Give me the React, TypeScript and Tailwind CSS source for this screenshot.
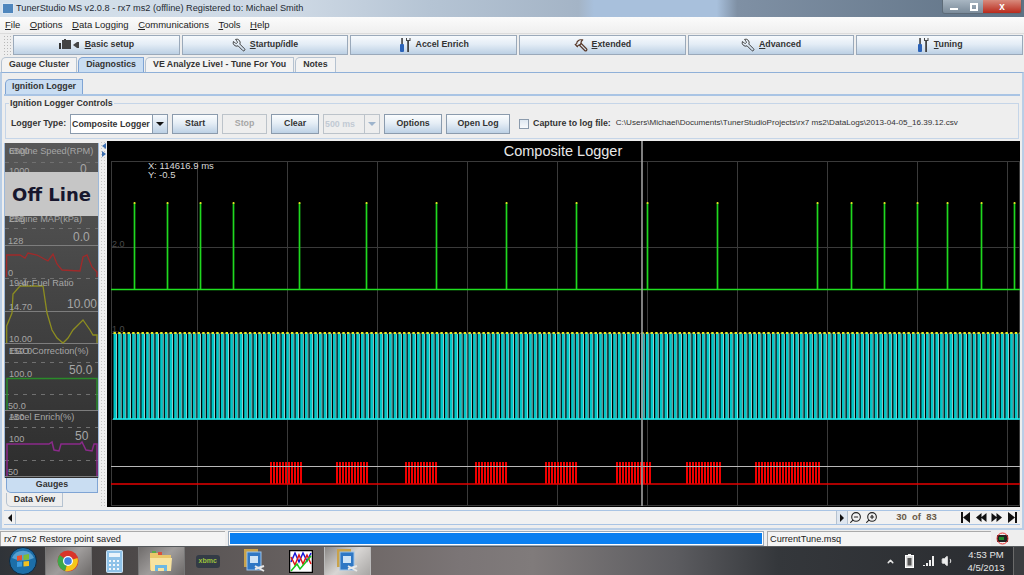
import React from 'react';
import { Hammer, Wrench, ZoomIn, ZoomOut, ChevronUp, Volume1 } from 'lucide-react';

const pulses = [134, 167, 200, 233, 299, 366, 436, 506, 576, 647, 717, 817, 851, 884, 917, 947, 981, 1014];
const bursts = [[270, 302], [336, 369], [405, 438], [475, 508], [545, 578], [616, 650], [686, 720], [755, 820]];
const gridX = [197, 287, 377, 467, 557, 647, 737, 827, 917, 1007];
const gridY = [247, 333, 419];

const stripes: number[] = [];
for (let x = 113.5; x < 1020; x += 4.67) stripes.push(x);

function ToolIcon({ kind }: { kind: string }) {
    if (kind === 'film') {
        return (
            <svg width="22" height="12" viewBox="0 0 22 12">
                <rect x="0" y="4" width="2" height="6" fill="#333" />
                <rect x="3" y="1" width="9" height="9" fill="#444" />
                <rect x="5" y="0" width="2" height="2" fill="#444" />
                <path d="M14 6 L18 3 V9 Z" fill="#444" />
                <rect x="18" y="3" width="2" height="6" fill="#444" />
            </svg>
        );
    }
    if (kind === 'wrench') return <Wrench size={14} strokeWidth={1.6} color="#333" className="-scale-x-100" />;
    if (kind === 'hammer') return <Hammer size={14} strokeWidth={2} color="#5a3a2a" className="-scale-x-100" />;
    return (
        <svg width="13" height="14" viewBox="0 0 13 14">
            <rect x="1" y="6" width="4" height="8" rx="1" fill="#2a62b8" />
            <rect x="2.3" y="0" width="1.5" height="6" fill="#333" />
            <path d="M7 0 V3 H8.2 V14 H10 V3 H11.5 V0 H10.5 V2 H8 V0 Z" fill="#444" />
        </svg>
    );
}

function ToolButton({ icon, first, rest }: { icon: string; first: string; rest: string }) {
    return (
        <button className="flex-1 h-[20px] flex items-center justify-center gap-1 border border-[#9aa9ba] bg-[linear-gradient(#f7fafd,#e4edf6_45%,#bcd0e4)] text-[8.8px] font-bold text-[#333]">
            <ToolIcon kind={icon} />
            <span><u>{first}</u>{rest}</span>
        </button>
    );
}

function CtlButton({ label, w, disabled }: { label: string; w: string; disabled?: boolean }) {
    return (
        <button className={`${w} h-[20px] border text-[8.8px] font-bold ${disabled ? 'border-[#bcc3ca] bg-[#eeeeee] text-[#a6a6a6]' : 'border-[#8b9bad] bg-[linear-gradient(#fbfdfe,#e6eef6_45%,#bdd1e5)] text-[#333]'}`}>
            {label}
        </button>
    );
}

function MainTab({ label, active }: { label: string; active?: boolean }) {
    return (
        <div className={`h-[15px] flex items-center px-[7px] rounded-tl-[5px] border border-b-0 text-[8.8px] font-bold text-[#333] ${active ? 'border-[#7fa4d4] bg-[#c9ddf2]' : 'border-[#b5c2d0] bg-[#f3f3f3]'}`}>
            {label}
        </div>
    );
}

function ChartPlot() {
    return (
        <svg width="913" height="366" viewBox="107 141 913 366" className="block">
            <rect x="107" y="141" width="913" height="366" fill="#000" />
            <rect x="111.5" y="161.5" width="908" height="344" fill="none" stroke="#3a3a3a" />
            {gridX.map((x) => <line key={x} x1={x + 0.5} y1="161" x2={x + 0.5} y2="505" stroke="#3a3a3a" />)}
            {gridY.map((y) => <line key={y} x1="111" y1={y + 0.5} x2="1020" y2={y + 0.5} stroke="#3a3a3a" />)}
            <text x="563" y="156" textAnchor="middle" fontSize="14.5" fill="#e8e8e8">Composite Logger</text>
            <text x="148" y="169" fontSize="9.5" fill="#d8d8d8">X: 114616.9 ms</text>
            <text x="148" y="178" fontSize="9.5" fill="#d8d8d8">Y: -0.5</text>
            <text x="112" y="247" fontSize="9" fill="#4a4a4a">2.0</text>
            <text x="112" y="332" fontSize="9" fill="#4a4a4a">1.0</text>

            <line x1="111" y1="289.5" x2="1020" y2="289.5" stroke="#1fe01f" strokeWidth="1.6" />
            {pulses.map((x) => (
                <g key={x}>
                    <line x1={x + 0.5} y1="203" x2={x + 0.5} y2="289" stroke="#1fd81f" strokeWidth="1.7" />
                    <rect x={x - 0.3} y="202" width="1.7" height="2" fill="#dddd22" />
                </g>
            ))}

            {stripes.map((x) => <rect key={x} x={x} y="333" width="2.6" height="86" fill="#00c8c8" />)}
            {stripes.map((x) => <rect key={x} x={x + 2.6} y="334" width="0.8" height="85" fill="#a8ffff" />)}
            {stripes.map((x) => <rect key={x} x={x} y="332" width="2.4" height="2" fill="#e8e822" />)}
            <line x1="113" y1="419" x2="1020" y2="419" stroke="#19f0f0" strokeWidth="1.5" />

            {bursts.flatMap(([a, b]) => {
                const bars = [];
                for (let x = a; x < b; x += 3) bars.push(<rect key={x} x={x} y="462" width="2" height="22" fill="#f00000" />);
                return bars;
            })}
            <line x1="111" y1="466.5" x2="1020" y2="466.5" stroke="#b8b8b8" />
            <line x1="111" y1="484" x2="1020" y2="484" stroke="#e60000" strokeWidth="1.3" />
            <line x1="642" y1="141" x2="642" y2="506" stroke="#a0a0a0" strokeWidth="1.6" />
        </svg>
    );
}

function GaugeStrip() {
    const txt = '#a6a6a6';
    const solid = [245, 311, 343, 410, 476];
    const dashed = [162, 195, 228, 278, 362, 394, 427, 460];
    return (
        <svg width="93" height="335" viewBox="5 143 93 335" className="block">
            <defs>
                <linearGradient id="gaugeBg" x1="0" y1="0" x2="0" y2="1">
                    <stop offset="0" stopColor="#585858" />
                    <stop offset="1" stopColor="#2d2d2d" />
                </linearGradient>
            </defs>
            <rect x="5" y="143" width="93" height="335" fill="url(#gaugeBg)" />
            {solid.map((y) => <line key={y} x1="5" y1={y + 0.5} x2="98" y2={y + 0.5} stroke="#7d7d7d" />)}
            {dashed.map((y) => <line key={y} x1="5" y1={y + 0.5} x2="98" y2={y + 0.5} stroke="#707070" strokeDasharray="4 5" />)}

            <polyline fill="none" stroke="#a02a2a" strokeWidth="1.3" points="6.5,277 6.7,255 20,255 25,258 28,253 37,255 48,261 53,254 57,264 62,270 80,271 83,257 87,255 92,267 97,272 97,277" />
            <polyline fill="none" stroke="#8d8d20" strokeWidth="1.3" points="6.7,343 6.7,326 12,313 13,294 20,286 43,286 47,313 52,330 57,338 63,343 68,338 73,330 83,320 90,330 93,335 97,335 97,343" />
            <polyline fill="none" stroke="#2a8a2a" strokeWidth="1.5" points="7,410 7,378.5 97,378.5 97,410" />
            <polyline fill="none" stroke="#8a2a8a" strokeWidth="1.5" points="7,476 7,444 49,444 52,442 54,450 59,451 61,444 80,444 82,442 86,450 92,451 94,444 97,444 97,476" />

            <g fontSize="9.2" fill={txt} fontFamily="'Liberation Sans', sans-serif">
                <text x="9" y="154">6500</text>
                <text x="9" y="154">Engine Speed(RPM)</text>
                <text x="9" y="174">1000</text>
                <text x="80" y="173" fontSize="12">0</text>
                <text x="9" y="222">255</text>
                <text x="9" y="222">Engine MAP(kPa)</text>
                <text x="8" y="244">128</text>
                <text x="73" y="241" fontSize="12">0.0</text>
                <text x="8" y="276">0</text>
                <text x="9" y="286">19.4</text>
                <text x="18" y="286">Air:Fuel Ratio</text>
                <text x="9" y="310">14.70</text>
                <text x="67" y="308" fontSize="12">10.00</text>
                <text x="9" y="342">10.00</text>
                <text x="9" y="354">150.0</text>
                <text x="9" y="354">EGO Correction(%)</text>
                <text x="9" y="377">100.0</text>
                <text x="69" y="374" fontSize="12">50.0</text>
                <text x="8" y="409">50.0</text>
                <text x="9" y="420">150</text>
                <text x="9" y="420">Accel Enrich(%)</text>
                <text x="9" y="442">100</text>
                <text x="75" y="440" fontSize="12">50</text>
                <text x="8" y="475">50</text>
            </g>
        </svg>
    );
}

function Splitter() {
    return (
        <div className="w-[7px] flex flex-col items-center bg-[#eeeeee] bg-[radial-gradient(#c4c4c4_0.7px,transparent_0.8px)] bg-[length:3px_3px]">
            <span className="w-0 h-0 border-y-[3px] border-y-transparent border-r-[4px] border-r-[#3d6fb0] mt-[2px]" />
            <span className="w-0 h-0 border-y-[3px] border-y-transparent border-l-[4px] border-l-[#3d6fb0] mt-[2px]" />
        </div>
    );
}

function NavGlyph({ d }: { d: string }) {
    return (
        <svg width="11" height="11" viewBox="0 0 11 11"><path d={d} fill="#111" /></svg>
    );
}

function TaskItem({ active, hot, children }: { active?: boolean; hot?: boolean; children: React.ReactNode }) {
    return (
        <div className={`w-[46.5px] h-full flex items-center justify-center ${active ? 'bg-[linear-gradient(135deg,#8a8785,#d8d6d4_50%,#a8a6a4)] border-x border-[#bbb]' : hot ? 'bg-[linear-gradient(135deg,#6f6c6b,#a09d9c_50%,#6d6a69)] border-x border-[#777]' : ''}`}>
            {children}
        </div>
    );
}

function TunerGlyph() {
    return (
        <svg width="22" height="24" viewBox="0 0 22 24">
            <rect x="1" y="0" width="14" height="18" fill="#c9a24a" />
            <rect x="4" y="3" width="14" height="18" fill="#2f77c4" stroke="#9cc4ea" />
            <rect x="7" y="7" width="8" height="7" fill="#cfe3f5" />
            <path d="M12 20 L21 17 M12 17 L21 22" stroke="#e8e8e8" strokeWidth="2" />
        </svg>
    );
}

function Taskbar() {
    return (
        <div className="h-[29px] flex items-stretch border-t border-[#55595c] bg-[linear-gradient(90deg,#2f3338,#3f3c3c_6%,#5b5656_20%,#6e6766_35%,#7b7576_45%,#807b7b_52%,#5c5c60_66%,#34373b_76%,#2a2c30_100%)]">
            <div className="w-[45px] flex items-center justify-center">
                <svg width="28" height="28" viewBox="0 0 28 28">
                    <circle cx="14" cy="14" r="13.5" fill="#1c6ea8" stroke="#0c2a44" />
                    <path d="M3 11 A12 12 0 0 1 25 11 Q14 16 3 11 Z" fill="#7fc2ea" opacity="0.6" />
                    <path d="M8 9 L13 8 V13 L8 14 Z" fill="#e8502f" />
                    <path d="M14.5 8 L20 7 V12.5 L14.5 13 Z" fill="#7dbb35" />
                    <path d="M8 15 L13 14.5 V19.5 L8 20 Z" fill="#3d9be0" />
                    <path d="M14.5 14.5 L20 14 V19 L14.5 19.5 Z" fill="#f4c120" />
                </svg>
            </div>
            <TaskItem hot>
                <svg width="22" height="22" viewBox="0 0 22 22">
                    <circle cx="11" cy="11" r="10.5" fill="#d9352a" />
                    <path d="M11 11 L20.5 8 A10.5 10.5 0 0 1 8 21 Z" fill="#f5c71a" />
                    <path d="M11 11 L8 21 A10.5 10.5 0 0 1 2.5 5 Z" fill="#3da84a" />
                    <circle cx="11" cy="11" r="5" fill="#fff" />
                    <circle cx="11" cy="11" r="3.8" fill="#3f7fe0" />
                </svg>
            </TaskItem>
            <TaskItem>
                <svg width="17" height="23" viewBox="0 0 17 23">
                    <rect x="0.5" y="0.5" width="16" height="22" rx="1" fill="#8fc2e8" stroke="#cfe3f2" />
                    <rect x="3" y="3" width="11" height="4" fill="#eaf4fb" />
                    <path d="M3 10h2v2H3zM7 10h2v2H7zM11 10h2v2h-2zM3 14h2v2H3zM7 14h2v2H7zM11 14h2v2h-2zM3 18h2v2H3zM7 18h2v2H7zM11 18h2v2h-2z" fill="#f2f7fb" />
                </svg>
            </TaskItem>
            <TaskItem hot>
                <svg width="24" height="22" viewBox="0 0 24 22">
                    <path d="M1 3 H9 L11 5 H22 V20 H1 Z" fill="#e9c76a" />
                    <rect x="3" y="1" width="4" height="2" fill="#58a94a" />
                    <rect x="9" y="2" width="4" height="3" fill="#d8503c" />
                    <path d="M1 8 H23 L22 21 H2 Z" fill="#f7e3a0" />
                    <path d="M6 15 H18 V21 H15 V18 H9 V21 H6 Z" fill="#6cb8e4" />
                </svg>
            </TaskItem>
            <TaskItem>
                <div className="w-[24px] h-[13px] rounded-[3px] bg-[#333b46] text-[#9bc23c] text-[7px] font-bold flex items-center justify-center">xbmc</div>
            </TaskItem>
            <TaskItem><TunerGlyph /></TaskItem>
            <TaskItem>
                <svg width="24" height="23" viewBox="0 0 24 23">
                    <rect x="0.5" y="0.5" width="23" height="22" fill="#fff" stroke="#000" strokeWidth="1.5" />
                    <polyline points="2,12 6,3 10,12 14,3 18,11 22,3" fill="none" stroke="#1919d8" strokeWidth="1.5" />
                    <polyline points="2,7 6,15 10,5 14,14 18,5 22,14" fill="none" stroke="#e01818" strokeWidth="1.5" />
                    <polyline points="2,21 8,14 11,19 22,6" fill="none" stroke="#18c818" strokeWidth="1.5" />
                </svg>
            </TaskItem>
            <TaskItem active><TunerGlyph /></TaskItem>
            <div className="flex-1" />
            <div className="flex items-center text-[#e4e4e4]">
                <ChevronUp size={9} strokeWidth={4} className="mr-[10px]" />
                <svg width="9" height="14" viewBox="0 0 9 14" className="mr-[9px]">
                    <rect x="3" y="0" width="3" height="2" fill="#eee" />
                    <rect x="0.5" y="1.5" width="8" height="12" fill="#ddd" stroke="#fff" />
                    <rect x="2.5" y="4" width="4" height="7.5" fill="#555" />
                </svg>
                <svg width="12" height="10" viewBox="0 0 12 10" className="mr-[6px]">
                    <path d="M0 9h2v1H0zM3 7h2v3H3zM6 4h2v6H6zM9 0h2v10H9z" fill="#eee" />
                </svg>
                <Volume1 size={14} fill="#eee" strokeWidth={1.5} className="mr-[11px]" />
                <div className="w-[40px] text-center text-[9.5px] leading-[13px] text-[#e6e6e6]">
                    <div>4:53 PM</div>
                    <div>4/5/2013</div>
                </div>
                <div className="w-[11px] h-full ml-[7px] border-l border-[#6a6a6a] bg-[#3b3d40]" />
            </div>
        </div>
    );
}

export default function App() {
    return (
        <div className="w-[1024px] h-[575px] overflow-hidden flex flex-col bg-[#eeeeee] font-['Liberation_Sans',Arial,sans-serif]">
            {/* window title */}
            <div className="h-[17px] flex items-center bg-[linear-gradient(90deg,#d5e1ec,#cdd8e4_29%,#b5c4d4_42%,#a4b4c6_56.5%,#a8c0dc_58%,#a8c0dc_70%,#7f90a4_72%,#5f7285_100%)]">
                <span className="w-[12px] h-[11px] ml-[2px] mr-[2px] bg-[#4e86bd] border border-[#dce7f2]" />
                <span className="text-[9.2px] text-[#1f2a33]">TunerStudio MS v2.0.8 - rx7 ms2 (offline) Registered to: Michael Smith</span>
                <div className="flex-1" />
                <div className="flex h-[14px] mr-[2px] mb-[3px] rounded-b-[3px] overflow-hidden border border-[#5d6b78] border-t-0">
                    <span className="w-[21px] flex items-end justify-center pb-[3px] bg-[linear-gradient(#a8b6c2,#7b8b9a)]"><span className="w-[8px] h-[2px] bg-white" /></span>
                    <span className="w-[19px] flex items-center justify-center bg-[linear-gradient(#a8b6c2,#7b8b9a)]"><span className="w-[8px] h-[8px] border-2 border-white" /></span>
                    <span className="w-[38px] flex items-center justify-center bg-[linear-gradient(#d88a7c,#b92a1c)] text-white text-[10px] font-bold leading-none">x</span>
                </div>
            </div>

            {/* menu */}
            <div className="h-[16px] flex items-center gap-[9.5px] px-[5px] bg-[linear-gradient(#fbfbfb,#efefef)] text-[9.5px] text-[#222]">
                <span><u>F</u>ile</span>
                <span><u>O</u>ptions</span>
                <span><u>D</u>ata Logging</span>
                <span><u>C</u>ommunications</span>
                <span><u>T</u>ools</span>
                <span><u>H</u>elp</span>
            </div>

            {/* toolbar */}
            <div className="h-[24px] flex items-center gap-[2px] pl-[3px] pr-[1px] pb-[1px] border-t border-[#dcdcdc]">
                <div className="w-[8px] h-[20px] bg-[radial-gradient(#b8b8b8_0.7px,transparent_0.8px)] bg-[length:3px_3px]" />
                <ToolButton icon="film" first="B" rest="asic setup" />
                <ToolButton icon="wrench" first="S" rest="tartup/idle" />
                <ToolButton icon="tools" first="" rest="Accel Enrich" />
                <ToolButton icon="hammer" first="E" rest="xtended" />
                <ToolButton icon="wrench" first="A" rest="dvanced" />
                <ToolButton icon="tools" first="T" rest="uning" />
            </div>

            {/* main tabs */}
            <div className="h-[15px] flex items-end pl-[1px] gap-px">
                <MainTab label="Gauge Cluster" />
                <MainTab label="Diagnostics" active />
                <MainTab label="VE Analyze Live! - Tune For You" />
                <MainTab label="Notes" />
            </div>

            <div className="flex-1 min-h-0 flex flex-col px-[2px] pt-[6px] border-t border-[#8fb0d8] border-x-2 border-x-[#b9cee6] border-b-2 border-b-[#b9cee6]">
                <div className="h-[15px] flex items-end">
                    <div className="h-[15px] flex items-center px-[6px] ml-[1px] rounded-tl-[5px] border border-b-0 border-[#7fa4d4] bg-[#c9ddf2] text-[8.8px] font-bold text-[#333]">Ignition Logger</div>
                </div>
                <div className="flex-1 min-h-0 flex flex-col border-t-2 border-[#a9c4e4]">
                    {/* controls */}
                    <div className="relative mx-[1px] mt-[7px] h-[36px] border border-[#c5d5e8] flex items-center gap-[4px] pl-[5px] pt-[5px]">
                        <span className="absolute -top-[7px] left-[3px] px-[1px] bg-[#eeeeee] text-[8.8px] font-bold text-[#333] leading-[12px]">Ignition Logger Controls</span>
                        <span className="text-[8.8px] font-bold text-[#333] whitespace-nowrap">Logger Type:</span>
                        <div className="w-[98px] h-[20px] flex border border-[#8b9bad] bg-white">
                            <span className="flex-1 text-[8.8px] font-bold text-[#333] leading-[18px] pl-[1px] whitespace-nowrap">Composite Logger</span>
                            <span className="w-[15px] flex items-center justify-center border-l border-[#8b9bad] bg-[linear-gradient(#f7fafd,#bdd1e5)]"><span className="w-0 h-0 border-x-[4px] border-x-transparent border-t-[4px] border-t-[#111]" /></span>
                        </div>
                        <CtlButton label="Start" w="w-[46px]" />
                        <CtlButton label="Stop" w="w-[45px]" disabled />
                        <CtlButton label="Clear" w="w-[48px]" />
                        <div className="w-[57px] h-[20px] flex border border-[#bcc3ca]">
                            <span className="flex-1 text-[8.8px] font-bold text-[#c2cad4] leading-[18px] pl-[1px]">500 ms</span>
                            <span className="w-[15px] flex items-center justify-center border-l border-[#bcc3ca]"><span className="w-0 h-0 border-x-[4px] border-x-transparent border-t-[4px] border-t-[#9eb4cc]" /></span>
                        </div>
                        <CtlButton label="Options" w="w-[58px]" />
                        <CtlButton label="Open Log" w="w-[64px]" />
                        <span className="w-[10px] h-[10px] ml-[5px] border border-[#8b9bad] bg-[linear-gradient(#dfe8f1,#f8fafc)]" />
                        <span className="text-[8.8px] font-bold text-[#333] whitespace-nowrap">Capture to log file:</span>
                        <span className="text-[8.1px] text-[#333] ml-[1px] whitespace-nowrap">C:\Users\Michael\Documents\TunerStudioProjects\rx7 ms2\DataLogs\2013-04-05_16.39.12.csv</span>
                    </div>

                    <div className="flex-1 min-h-0 flex mt-[2px]">
                        <div className="w-[96px] flex flex-col pt-[2px]">
                            <div className="relative w-[95px] border-x border-[#9db9da]">
                                <GaugeStrip />
                                <div className="absolute left-0 right-0 top-[29px] h-[44px] bg-[#c6c6c6] flex items-center justify-center text-[18px] font-bold text-[#17172e] font-['DejaVu_Sans',sans-serif]">Off Line</div>
                            </div>
                            <div className="h-[15px] ml-[2px] mr-[2px] flex items-center justify-center rounded-bl-[5px] bg-[#c9ddf2] border border-t-0 border-[#7fa4d4] text-[8.8px] font-bold text-[#333]">Gauges</div>
                            <div className="h-[14px] w-[57px] ml-[2px] flex items-center justify-center rounded-bl-[5px] border border-t-0 border-[#b5c2d0] text-[8.8px] font-bold text-[#333]">Data View</div>
                        </div>
                        <Splitter />
                        <ChartPlot />
                    </div>

                    {/* scrollbar */}
                    <div className="h-[15px] mt-[3px] mb-[3px] flex items-center border-y border-[#a9c4e4] bg-[#f1f1f1]">
                        <span className="w-[12px] h-full flex items-center justify-center border-r border-[#b5c2d0]"><span className="w-0 h-0 border-y-[4px] border-y-transparent border-r-[4px] border-r-[#111]" /></span>
                        <div className="flex-1" />
                        <span className="w-[12px] h-full flex items-center justify-center border-x border-[#b5c2d0] bg-[#dfe7f0]"><span className="w-0 h-0 border-y-[4px] border-y-transparent border-l-[4px] border-l-[#111]" /></span>
                        <ZoomOut size={13} color="#222" className="ml-[1px] -scale-x-100" />
                        <ZoomIn size={13} color="#222" className="ml-[3px] -scale-x-100" />
                        <span className="ml-[18px] text-[9.5px] font-bold text-[#6a5a48] whitespace-nowrap w-[42px]">30&nbsp; of&nbsp; 83</span>
                        <div className="flex items-center gap-[4.6px] ml-[22px] mr-[2px]">
                            <NavGlyph d="M1 0h2v11H1zM3 5.5L10 0v11z" />
                            <NavGlyph d="M0 5.5L5.5 1v9zM5 5.5L10.5 1v9z" />
                            <NavGlyph d="M0.5 1L6 5.5L0.5 10zM5.5 1L11 5.5L5.5 10z" />
                            <NavGlyph d="M8 0h2v11H8zM1 0l7 5.5L1 11z" />
                        </div>
                    </div>
                </div>
            </div>

            {/* status bar */}
            <div className="h-[16px] flex items-stretch gap-[3px] pt-[1px] text-[9.2px] text-[#222]">
                <div className="w-[225px] pl-[3px] leading-[14px] border-t border-l border-[#aaa] bg-[#f4f4f4]">rx7 ms2 Restore point saved</div>
                <div className="w-[536px] border border-[#9aaabb] bg-white p-px"><div className="h-full bg-[#0a7ff0]" /></div>
                <div className="w-[224px] pl-[2px] leading-[14px] border-t border-l border-[#aaa] bg-[#f4f4f4]">CurrentTune.msq</div>
                <div className="w-[16px] flex items-center justify-center">
                    <svg width="13" height="13" viewBox="0 0 13 13">
                        <rect x="1" y="3" width="11" height="7" fill="#222" />
                        <rect x="3" y="5" width="5" height="3" fill="#1d8a2a" />
                        <circle cx="6.5" cy="6.5" r="5.5" fill="none" stroke="#e33" strokeWidth="1" />
                    </svg>
                </div>
            </div>

            <Taskbar />
        </div>
    );
}
